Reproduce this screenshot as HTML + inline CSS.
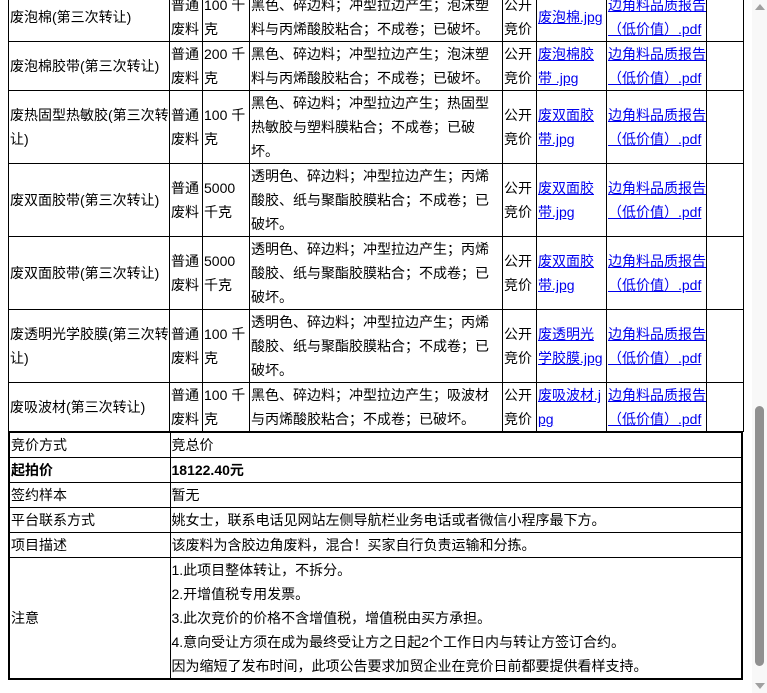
<!DOCTYPE html>
<html><head><meta charset="utf-8"><style>
body{margin:0;width:767px;height:693px;overflow:hidden;background:#fff;font-family:"Liberation Sans","Noto Sans CJK SC",sans-serif;font-size:14px;color:#000;position:relative}
table{border-collapse:collapse;position:absolute;left:8px;table-layout:fixed}
td{border:1px solid #000;padding:0 0 0 1px;line-height:24px;vertical-align:middle;overflow:hidden;word-break:break-all}
a{color:#00e;text-decoration:underline}
#t1{top:-8px;width:735px}
#t2{top:431px;width:735px;border:2px solid #000}
#t2 td{height:24px}
.sb{position:absolute;left:752px;top:0;width:15px;height:693px;background:#f8f8f8}
.th{position:absolute;left:755px;top:406px;width:9px;height:260px;background:#909090;border-radius:5px}
</style></head><body>
<table id="t1">
<colgroup><col style="width:161px"><col style="width:33px"><col style="width:47px"><col style="width:253px"><col style="width:34px"><col style="width:70px"><col style="width:100px"><col style="width:37px"></colgroup>
<tr style="height:49px"><td>废泡棉(第三次转让)</td><td>普通废料</td><td>100 千克</td><td>黑色、碎边料；冲型拉边产生；泡沫塑料与丙烯酸胶粘合；不成卷；已破坏。</td><td>公开竞价</td><td><a>废泡棉.jpg</a></td><td><a>边角料品质报告（低价值）.pdf</a></td><td></td></tr>
<tr style="height:49px"><td>废泡棉胶带(第三次转让)</td><td>普通废料</td><td>200 千克</td><td>黑色、碎边料；冲型拉边产生；泡沫塑料与丙烯酸胶粘合；不成卷；已破坏。</td><td>公开竞价</td><td><a>废泡棉胶带 .jpg</a></td><td><a>边角料品质报告（低价值）.pdf</a></td><td></td></tr>
<tr style="height:73px"><td>废热固型热敏胶(第三次转让)</td><td>普通废料</td><td>100 千克</td><td>黑色、碎边料；冲型拉边产生；热固型热敏胶与塑料膜粘合；不成卷；已破坏。</td><td>公开竞价</td><td><a>废双面胶带.jpg</a></td><td><a>边角料品质报告（低价值）.pdf</a></td><td></td></tr>
<tr style="height:73px"><td>废双面胶带(第三次转让)</td><td>普通废料</td><td>5000 千克</td><td>透明色、碎边料；冲型拉边产生；丙烯酸胶、纸与聚酯胶膜粘合；不成卷；已破坏。</td><td>公开竞价</td><td><a>废双面胶带.jpg</a></td><td><a>边角料品质报告（低价值）.pdf</a></td><td></td></tr>
<tr style="height:73px"><td>废双面胶带(第三次转让)</td><td>普通废料</td><td>5000 千克</td><td>透明色、碎边料；冲型拉边产生；丙烯酸胶、纸与聚酯胶膜粘合；不成卷；已破坏。</td><td>公开竞价</td><td><a>废双面胶带.jpg</a></td><td><a>边角料品质报告（低价值）.pdf</a></td><td></td></tr>
<tr style="height:73px"><td>废透明光学胶膜(第三次转让)</td><td>普通废料</td><td>100 千克</td><td>透明色、碎边料；冲型拉边产生；丙烯酸胶、纸与聚酯胶膜粘合；不成卷；已破坏。</td><td>公开竞价</td><td><a>废透明光学胶膜.jpg</a></td><td><a>边角料品质报告（低价值）.pdf</a></td><td></td></tr>
<tr style="height:49px"><td>废吸波材(第三次转让)</td><td>普通废料</td><td>100 千克</td><td>黑色、碎边料；冲型拉边产生；吸波材与丙烯酸胶粘合；不成卷；已破坏。</td><td>公开竞价</td><td><a>废吸波材.jpg</a></td><td><a>边角料品质报告（低价值）.pdf</a></td><td></td></tr>
</table>
<table id="t2">
<colgroup><col style="width:161px"><col style="width:572px"></colgroup>
<tr><td>竞价方式</td><td>竞总价</td></tr>
<tr><td><b>起拍价</b></td><td><b>18122.40元</b></td></tr>
<tr><td>签约样本</td><td>暂无</td></tr>
<tr><td>平台联系方式</td><td>姚女士，联系电话见网站左侧导航栏业务电话或者微信小程序最下方。</td></tr>
<tr><td>项目描述</td><td>该废料为含胶边角废料，混合！买家自行负责运输和分拣。</td></tr>
<tr style="height:120px"><td>注意</td><td>1.此项目整体转让，不拆分。<br>2.开增值税专用发票。<br>3.此次竞价的价格不含增值税，增值税由买方承担。<br>4.意向受让方须在成为最终受让方之日起2个工作日内与转让方签订合约。<br>因为缩短了发布时间，此项公告要求加贸企业在竞价日前都要提供看样支持。</td></tr>
</table>
<div class="sb"></div><div class="th"></div>
<div style="position:absolute;left:755px;top:4px;width:0;height:0;border-left:5px solid transparent;border-right:5px solid transparent;border-bottom:6px solid #a0a0a0"></div>
<div style="position:absolute;left:755px;top:683px;width:0;height:0;border-left:5px solid transparent;border-right:5px solid transparent;border-top:6px solid #a0a0a0"></div>
</body></html>
